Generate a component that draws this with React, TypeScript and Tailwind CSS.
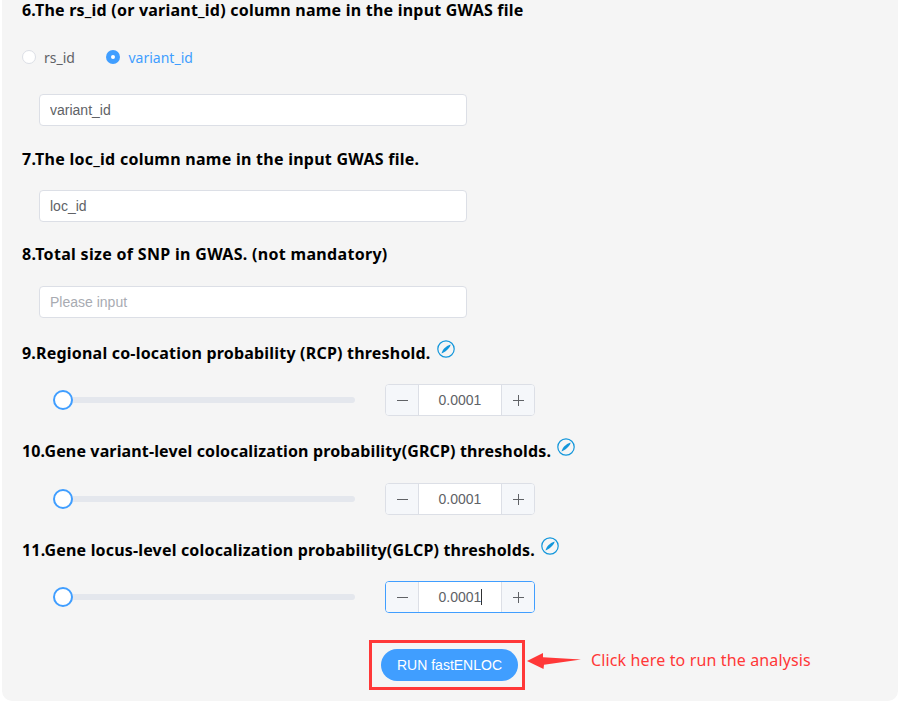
import React, { type ReactNode } from 'react';

const headingFont = "font-['Noto_Sans','Open_Sans',sans-serif]";
const arial = "font-['Liberation_Sans',Arial,sans-serif]";

function CompassIcon() {
  return (
    <svg className="ml-[6px] h-[18px] w-[18px] shrink-0 -translate-y-1" viewBox="0 0 18 18" fill="none">
      <circle cx="9" cy="9" r="8.2" stroke="#1296db" strokeWidth="1.2" />
      <path d="M13.6 4.4 C13.4 7 10 11 4.6 13.5 C5 10 8.6 6 13.6 4.4 Z" fill="#1296db" />
    </svg>
  );
}

function Heading({ children, spacing, className = '', info = false }: { children: ReactNode; spacing: string; className?: string; info?: boolean }) {
  return (
    <div className={`ml-5 flex h-[22px] items-center ${className}`}>
      <h3 className={`whitespace-nowrap text-[16px] leading-[22px] font-bold text-black ${headingFont} ${spacing}`}>{children}</h3>
      {info && <CompassIcon />}
    </div>
  );
}

function TextField({ value, placeholder, className = '' }: { value?: string; placeholder?: string; className?: string }) {
  return (
    <input
      className={`ml-[37px] block h-8 w-[428px] rounded-[4px] border border-[#dcdfe6] bg-white px-[10px] text-[14px] text-[#606266] outline-none placeholder:text-[#a8abb2] ${arial} ${className}`}
      defaultValue={value}
      placeholder={placeholder}
    />
  );
}

function ThresholdControl({ className = '', active = false }: { className?: string; active?: boolean }) {
  return (
    <div className={`ml-[51px] flex h-8 items-center ${className}`}>
      <div className="flex w-[302px] items-center">
        <span className="z-10 h-5 w-5 shrink-0 rounded-full border-2 border-[#409eff] bg-white" />
        <span className="-ml-[10px] h-[6px] flex-1 rounded-r-[3px] bg-[#e4e7ed]" />
      </div>
      <div className={`ml-[30px] flex h-8 w-[150px] overflow-hidden rounded-[4px] border bg-white ${active ? 'border-[#409eff]' : 'border-[#dcdfe6]'}`}>
        <button className="flex w-[33px] items-center justify-center border-r border-[#dcdfe6] bg-[#f5f7fa]">
          <svg className="h-[11px] w-[11px]" viewBox="0 0 11 11">
            <path d="M0 5.5H11" stroke="#606266" />
          </svg>
        </button>
        <div className={`flex flex-1 items-center justify-center text-[14px] text-[#606266] ${arial}`}>
          <span>0.0001</span>
          {active && <span className="-mr-px h-4 w-px bg-[#303133]" />}
        </div>
        <button className="flex w-[33px] items-center justify-center border-l border-[#dcdfe6] bg-[#f5f7fa]">
          <svg className="h-[11px] w-[11px]" viewBox="0 0 11 11">
            <path d="M0 5.5H11M5.5 0V11" stroke="#606266" />
          </svg>
        </button>
      </div>
    </div>
  );
}

export default function App() {
  return (
    <div className="h-[705px] w-[900px] overflow-hidden bg-white px-[2px]">
      <main className="flow-root h-[701px] rounded-b-[10px] bg-[#f5f5f5]">
        <Heading className="-mt-px" spacing="tracking-[0.22px]">6.The rs_id (or variant_id) column name in the input GWAS file</Heading>
        <div className={`mt-6 ml-5 flex h-6 items-center text-[14px] ${headingFont}`}>
          <span className="-mt-px h-[14px] w-[14px] rounded-full border border-[#dcdfe6] bg-white" />
          <span className="ml-2 w-[62px] text-[#606266]">rs_id</span>
          <span className="-mt-px flex h-[14px] w-[14px] items-center justify-center rounded-full bg-[#409eff]">
            <span className="h-1 w-1 rounded-full bg-white" />
          </span>
          <span className="ml-[8.5px] text-[#409eff]">variant_id</span>
        </div>
        <TextField className="mt-[25px]" value="variant_id" />
        <Heading className="mt-[22px]" spacing="tracking-[0.26px]">7.The loc_id column name in the input GWAS file.</Heading>
        <TextField className="mt-5" value="loc_id" />
        <Heading className="mt-[21px]" spacing="tracking-[0.31px]">8.Total size of SNP in GWAS. (not mandatory)</Heading>
        <TextField className="mt-[21px]" placeholder="Please input" />
        <Heading className="mt-6" spacing="tracking-[0.2px]" info>9.Regional co-location probability (RCP) threshold.</Heading>
        <ThresholdControl className="mt-5" />
        <Heading className="mt-6" spacing="tracking-[0.14px]" info>10.Gene variant-level colocalization probability(GRCP) thresholds.</Heading>
        <ThresholdControl className="mt-[21px]" />
        <Heading className="mt-6" spacing="tracking-[0.175px]" info>11.Gene locus-level colocalization probability(GLCP) thresholds.</Heading>
        <ThresholdControl className="mt-5" active />
        <div className="mt-[27px] ml-[367px] flex h-[50px]">
          <div className="flex w-[156px] items-center border-3 border-[#ff3838] pl-[9px]">
            <button className={`h-8 w-[137px] rounded-full bg-[#409eff] text-[14px] whitespace-nowrap text-white ${arial}`}>RUN fastENLOC</button>
          </div>
          <svg className="mt-[13px] ml-[2px] h-4 w-[54px]" viewBox="0 0 54 16">
            <path d="M0 8L16 0L16 4.2L54 6.4L17 11.8L16.5 16Z" fill="#ff3838" />
          </svg>
          <span className={`mt-[9px] ml-[10px] text-[16px] leading-[22px] tracking-[0.14px] whitespace-nowrap text-[#ff3838] ${headingFont}`}>Click here to run the analysis</span>
        </div>
      </main>
    </div>
  );
}
